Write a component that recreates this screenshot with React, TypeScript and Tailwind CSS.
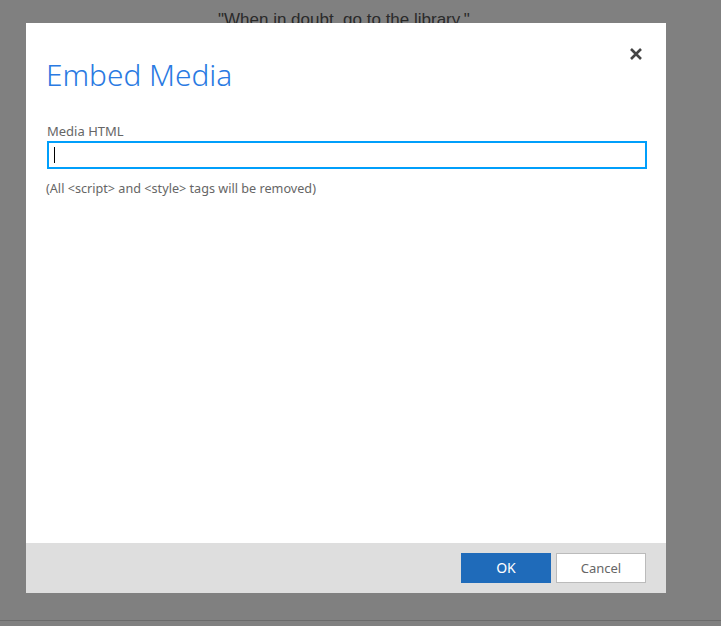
export default function App() {
  return (
    <div className="relative h-[626px] w-[721px] overflow-hidden bg-[#808080] font-['Noto_Sans',sans-serif]">
      <p className="pl-[218px] pt-[10px] font-['Liberation_Sans',sans-serif] text-[17px] leading-[20px] text-[#2a2a2a]">
        "When in doubt, go to the library."
      </p>
      <div className="absolute bottom-[5px] left-0 right-0 h-px bg-[#6b6b6b]" />
      <div className="absolute left-[26px] top-[23px] flex h-[570px] w-[640px] flex-col bg-white">
        <div className="flex min-h-0 flex-1 flex-col pl-[21px] pr-[19px]">
          <div className="relative">
            <h1 className="ml-[-1px] pt-[30px] text-[29.8px] font-light leading-[43px] text-[#2a7ae2]">Embed Media</h1>
            <svg className="absolute right-[5px] top-[25px] h-[12px] w-[12px]" viewBox="0 0 12 12" fill="none" stroke="#444" strokeWidth="2.6">
              <path d="M1 1l10 10M11 1L1 11" />
            </svg>
          </div>
          <label className="mt-[26px] text-[13px] leading-[19px] text-[#666]">Media HTML</label>
          <div className="flex h-[28px] items-center border-2 border-[#009ffb] bg-white pl-[5px]">
            <div className="h-[16px] w-px bg-black" />
          </div>
          <p className="ml-[-1px] mt-[10px] text-[12.65px] leading-[18px] text-[#666]">
            {"(All <script> and <style> tags will be removed)"}
          </p>
        </div>
        <div className="flex h-[50px] items-center justify-end gap-[5px] bg-[#dedede] pr-[20px]">
          <button className="h-[30px] w-[90px] bg-[#1f6bba] text-sm text-white">OK</button>
          <button className="h-[30px] w-[90px] border border-[#bbb] bg-white pt-px text-[13px] text-[#666]">Cancel</button>
        </div>
      </div>
    </div>
  );
}
